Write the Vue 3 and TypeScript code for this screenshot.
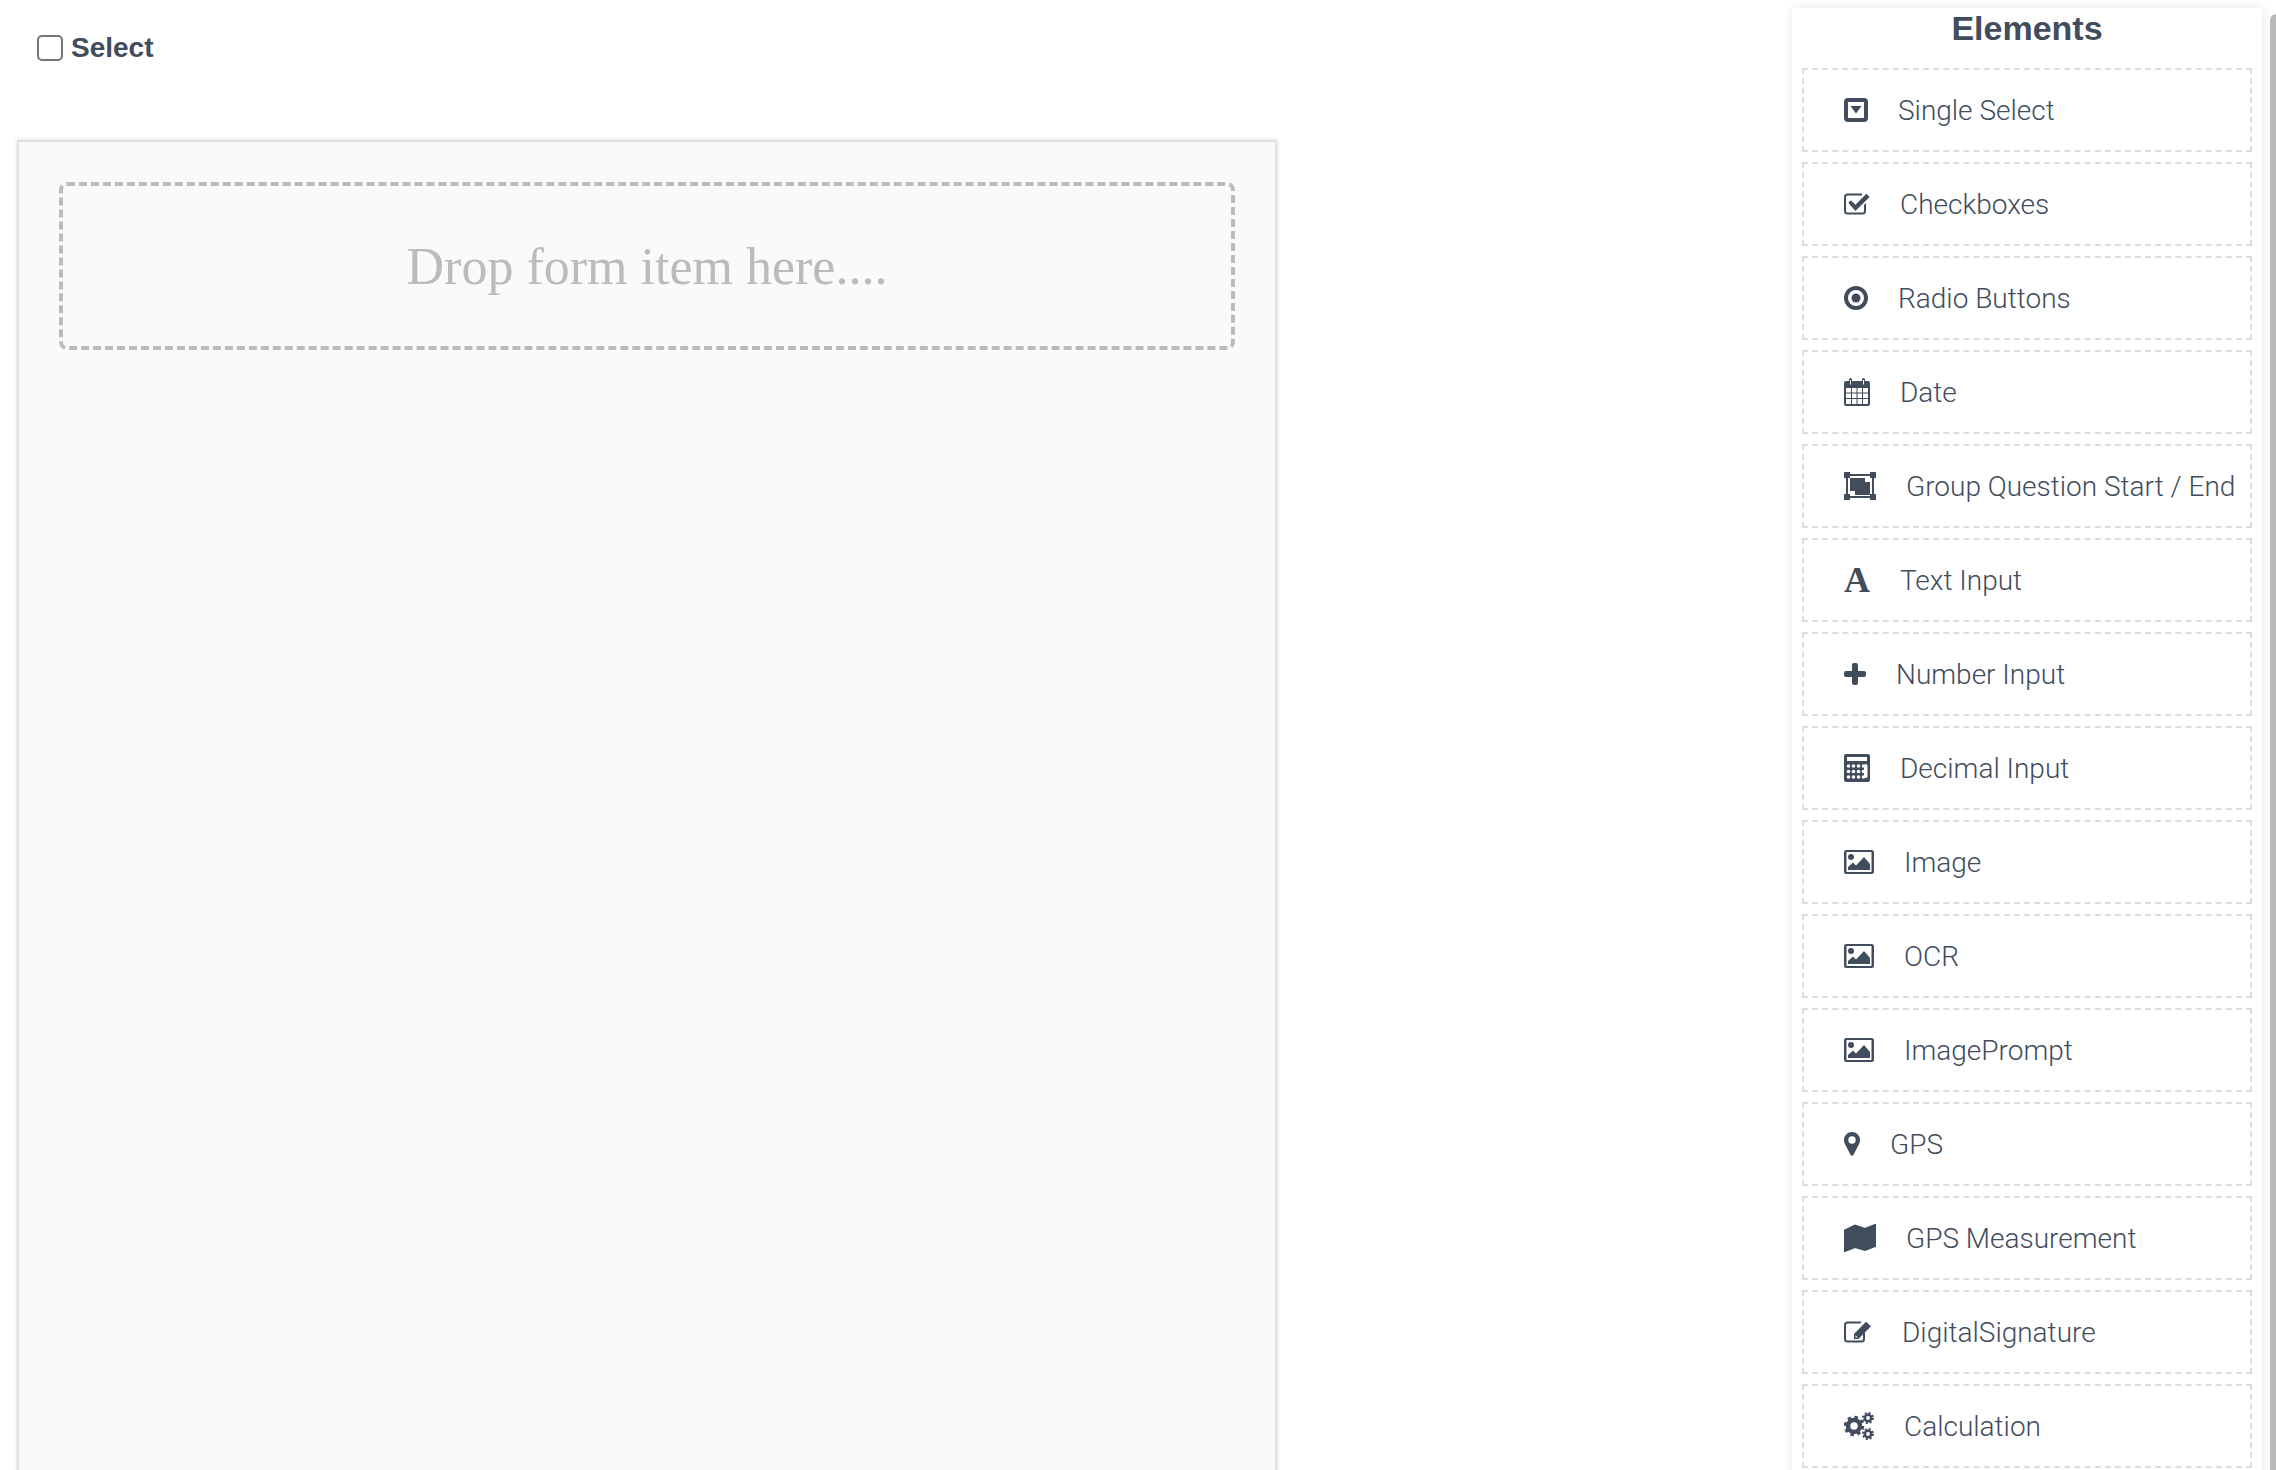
<script setup lang="ts">
interface FormElement {
  label: string;
  icon: string;
}

const elements: FormElement[] = [
  { label: "Single Select", icon: "select" },
  { label: "Checkboxes", icon: "check" },
  { label: "Radio Buttons", icon: "radio" },
  { label: "Date", icon: "date" },
  { label: "Group Question Start / End", icon: "group" },
  { label: "Text Input", icon: "font" },
  { label: "Number Input", icon: "plus" },
  { label: "Decimal Input", icon: "calc" },
  { label: "Image", icon: "image" },
  { label: "OCR", icon: "image" },
  { label: "ImagePrompt", icon: "image" },
  { label: "GPS", icon: "pin" },
  { label: "GPS Measurement", icon: "map" },
  { label: "DigitalSignature", icon: "edit" },
  { label: "Calculation", icon: "cogs" },
];

const calcDots = [0, 1, 2, 3];
</script>

<template>
  <div class="page">
    <main class="builder">
      <div class="cut-title">Form Question Types</div>
      <label class="select-row">
        <input type="checkbox" class="select-box" />
        <span>Select</span>
      </label>
      <section class="canvas">
        <div class="dropzone">Drop form item here....</div>
      </section>
    </main>

    <aside class="sidebar">
      <h3 class="sidebar-title">Elements</h3>
      <ul class="element-list">
        <li v-for="item in elements" :key="item.label" class="element">
          <svg v-if="item.icon === 'select'" class="icon" width="24" height="24" viewBox="0 0 24 24">
            <path fill-rule="evenodd" d="M4 0h16a4 4 0 0 1 4 4v16a4 4 0 0 1-4 4H4a4 4 0 0 1-4-4V4a4 4 0 0 1 4-4zM4 4v16h16V4z" />
            <path d="M6.5 8h11L12 15.5z" />
          </svg>
          <svg v-else-if="item.icon === 'check'" class="icon" width="26" height="22" viewBox="0 0 26 22">
            <path d="M3.5 0.5H18v2H3.5A1.5 1.5 0 0 0 2 4v14a1.5 1.5 0 0 0 1.500 1.500h15A1.500 1.500 0 0 0 20 18v-6l2-2v8a3.500 3.500 0 0 1-3.500 3.500h-15A3.500 3.500 0 0 1 0 18V4A3.500 3.500 0 0 1 3.500 0.500z" />
            <path d="M4.300 9.800l2.600-2.600 4.500 4.500L22.400 0.800l3.200 3.200-14.200 14z" />
          </svg>
          <svg v-else-if="item.icon === 'radio'" class="icon" width="24" height="24" viewBox="0 0 24 24">
            <circle cx="12" cy="12" r="10" fill="none" stroke="currentColor" stroke-width="4" />
            <circle cx="12" cy="12" r="4.500" />
          </svg>
          <svg v-else-if="item.icon === 'date'" class="icon" width="26" height="28" viewBox="0 0 26 28">
            <path fill-rule="evenodd" d="M2 3h3V1.500a1.500 1.500 0 0 1 3 0V3h10V1.500a1.500 1.500 0 0 1 3 0V3h3a2 2 0 0 1 2 2v21a2 2 0 0 1-2 2H2a2 2 0 0 1-2-2V5a2 2 0 0 1 2-2zM2 10v16h22V10zM6 2v4.500h1V2zM19 2v4.500h1V2z" />
            <path d="M7 10h1v16H7zM12.500 10h1v16h-1zM18 10h1v16h-1zM2 14.500h22v1H2zM2 20h22v1H2z" />
          </svg>
          <svg v-else-if="item.icon === 'group'" class="icon" width="32" height="28" viewBox="0 0 32 28" fill="none" stroke="currentColor">
            <g stroke-width="2">
              <rect x="1" y="1" width="4" height="4" />
              <rect x="27" y="1" width="4" height="4" />
              <rect x="1" y="23" width="4" height="4" />
              <rect x="27" y="23" width="4" height="4" />
              <path d="M5 3h22M5 25h22M3 5v18M29 5v18" />
              <path d="M7 7h13v11H7zM20 11h5v11H12v-4" />
            </g>
          </svg>
          <span v-else-if="item.icon === 'font'" class="icon glyph-a">A</span>
          <svg v-else-if="item.icon === 'plus'" class="icon" width="22" height="22" viewBox="0 0 22 22">
            <path d="M8 2a2 2 0 0 1 2-2h2a2 2 0 0 1 2 2v6h6a2 2 0 0 1 2 2v2a2 2 0 0 1-2 2h-6v6a2 2 0 0 1-2 2h-2a2 2 0 0 1-2-2v-6H2a2 2 0 0 1-2-2v-2a2 2 0 0 1 2-2h6z" />
          </svg>
          <svg v-else-if="item.icon === 'calc'" class="icon" width="26" height="28" viewBox="0 0 26 28">
            <path fill-rule="evenodd" d="M2 0h22a2 2 0 0 1 2 2v24a2 2 0 0 1-2 2H2a2 2 0 0 1-2-2V2a2 2 0 0 1 2-2zM3 3v4h20V3z" />
            <g fill="#fff">
              <template v-for="row in [0, 1, 2]" :key="row">
                <circle v-for="col in calcDots" :key="col" :cx="4.500 + col * 5" :cy="12 + row * 5.500" r="1.800" />
              </template>
              <rect x="20" y="10" width="3.500" height="14" rx="1.700" />
            </g>
          </svg>
          <svg v-else-if="item.icon === 'image'" class="icon" width="30" height="24" viewBox="0 0 30 24">
            <path fill-rule="evenodd" d="M2.500 0h25A2.500 2.500 0 0 1 30 2.500v19a2.500 2.500 0 0 1-2.500 2.500h-25A2.500 2.500 0 0 1 0 21.500v-19A2.500 2.500 0 0 1 2.500 0zM2.500 2v20h25V2z" />
            <circle cx="7" cy="7" r="3" />
            <path d="M4 20v-3l5-4.500 3 3 8-8.500 6 7v6z" />
          </svg>
          <svg v-else-if="item.icon === 'pin'" class="icon" width="16" height="24" viewBox="0 0 16 24">
            <path fill-rule="evenodd" d="M8 0a8 8 0 0 1 8 8c0 2-.6 3.300-1.300 4.800L9.500 22.800a1.700 1.700 0 0 1-3 0L1.300 12.800C.6 11.300 0 10 0 8a8 8 0 0 1 8-8zM8 4.300a3.700 3.700 0 1 0 0 7.400 3.700 3.700 0 0 0 0-7.400z" />
          </svg>
          <svg v-else-if="item.icon === 'map'" class="icon" width="32" height="28" viewBox="0 0 32 28" fill="none" stroke="currentColor">
            <path stroke-width="2" d="M1 6.500 L11 1.500 L21 5 L31 1 V22 L21 26 L11 23 L1 27 Z" />
            <path stroke-width="2" stroke-opacity="0.55" d="M11 2v21M21 5v21" />
          </svg>
          <svg v-else-if="item.icon === 'edit'" class="icon" width="28" height="22" viewBox="0 0 28 22">
            <path d="M3.500 0.500H18l-2 2H3.500A1.500 1.500 0 0 0 2 4v14a1.500 1.500 0 0 0 1.500 1.500h14A1.500 1.500 0 0 0 19 18v-5l2-2v7a3.500 3.500 0 0 1-3.500 3.500h-14A3.500 3.500 0 0 1 0 18V4A3.500 3.500 0 0 1 3.500 0.500z" />
            <path d="M22 0.800l5 4.500L14.500 18H10v-5z" />
            <path fill="#fff" d="M11.500 14.200l2.300 2.300h-2.300z" />
          </svg>
          <svg v-else class="icon" width="30" height="28" viewBox="0 0 30 28">
            <g fill="none" stroke="currentColor">
              <circle cx="10" cy="14" r="6" stroke-width="4.500" />
              <circle cx="10" cy="14" r="8.500" stroke-width="3.500" stroke-dasharray="3.300 3.400" />
              <circle cx="24" cy="6" r="3.200" stroke-width="2.500" />
              <circle cx="24" cy="6" r="5" stroke-width="2" stroke-dasharray="2 1.930" />
              <circle cx="24" cy="22" r="3.200" stroke-width="2.500" />
              <circle cx="24" cy="22" r="5" stroke-width="2" stroke-dasharray="2 1.930" />
            </g>
          </svg>
          <span class="element-label">{{ item.label }}</span>
        </li>
      </ul>
    </aside>

    <div class="scroll-thumb"></div>
  </div>
</template>

<style scoped>
.page {
  display: flex;
  height: 1470px;
  overflow: hidden;
  color: #414c5c;
  font-family: "Liberation Sans", Arial, sans-serif;
}

.builder {
  flex: 1;
  padding-left: 17px;
}

.cut-title {
  height: 2px;
  margin-left: 130px;
  overflow: hidden;
  font-size: 28px;
  line-height: 2px;
  color: #414c5c;
  opacity: 0;
}

.select-row {
  display: flex;
  align-items: center;
  gap: 8px;
  margin: 32px 0 0 20px;
  height: 27px;
  font-size: 28px;
  font-weight: 700;
}

.select-box {
  width: 26px;
  height: 26px;
  margin: 0;
  appearance: none;
  background: #fff;
  border: 2px solid #767676;
  border-radius: 5px;
}

.canvas {
  box-sizing: border-box;
  width: 1260px;
  height: 1400px;
  margin-top: 79px;
  padding: 40px;
  background: #fafafa;
  border: 2px solid #e2e2e2;
  box-shadow: 0 0 4px rgba(0, 0, 0, 0.15);
}

.dropzone {
  box-sizing: border-box;
  height: 168px;
  display: flex;
  align-items: center;
  justify-content: center;
  border: 4px dashed #bbb;
  border-radius: 8px;
  font-family: "Liberation Serif", "Times New Roman", serif;
  font-size: 52px;
  color: #bbb;
}

.sidebar {
  box-sizing: border-box;
  width: 470px;
  height: 1470px;
  margin-top: 8px;
  padding: 0 10px;
  background: #fff;
  box-shadow: 0 0 10px rgba(0, 0, 0, 0.1);
}

.sidebar-title {
  margin: 0;
  height: 60px;
  font-size: 34px;
  font-weight: 700;
  line-height: 40px;
  text-align: center;
}

.element-list {
  display: flex;
  flex-direction: column;
  gap: 10px;
  margin: 0;
  padding: 0;
  list-style: none;
}

.element {
  box-sizing: border-box;
  display: flex;
  align-items: center;
  gap: 30px;
  height: 84px;
  padding-left: 40px;
  border: 2px dashed #ddd;
}

.icon {
  flex: none;
  fill: currentColor;
}

.glyph-a {
  width: 26px;
  font-family: "Liberation Serif", "Times New Roman", serif;
  font-size: 36px;
  font-weight: 700;
  line-height: 28px;
  text-align: center;
}

.element-label {
  font-family: Roboto, "Liberation Sans", sans-serif;
  font-size: 28px;
  font-weight: 300;
}

.scroll-thumb {
  flex: none;
  width: 6px;
  margin: 14px 0 0 8px;
  background: #b9b9b9;
  border-top-left-radius: 6px;
}
</style>
